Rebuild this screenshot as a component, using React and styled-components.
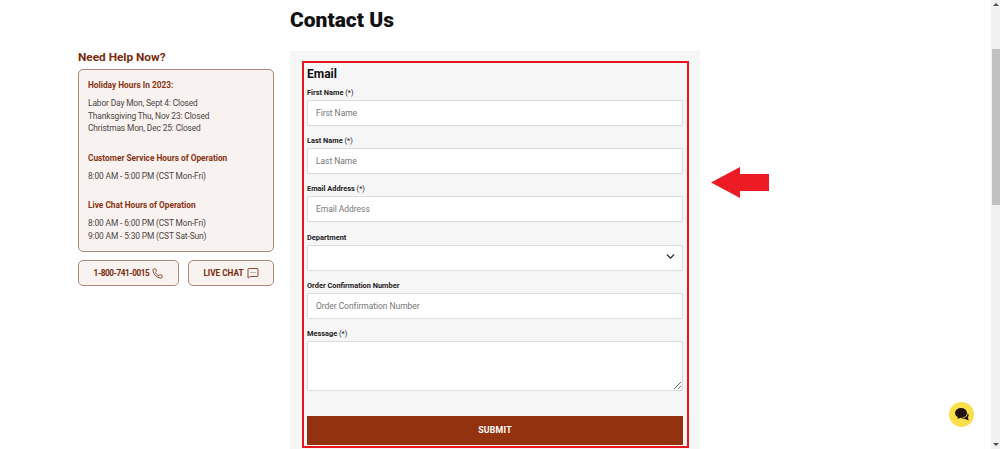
import React from "react";
import styled, { createGlobalStyle } from "styled-components";
import { Phone, MessageSquareMore, ChevronDown } from "lucide-react";

const GlobalStyle = createGlobalStyle`
  html, body {
    margin: 0;
    height: 449px;
    overflow: hidden;
    background: #fff;
    font-family: "Roboto", "Liberation Sans", sans-serif;
  }
  * { box-sizing: border-box; }
`;

const fields = [
  { label: "First Name", required: true, placeholder: "First Name" },
  { label: "Last Name", required: true, placeholder: "Last Name" },
  { label: "Email Address", required: true, placeholder: "Email Address" },
  { label: "Department", select: true },
  { label: "Order Confirmation Number", placeholder: "Order Confirmation Number" },
];

const App = () => {
  return (
    <Page>
      <GlobalStyle />
      <Content>
        <Sidebar>
          <HelpTitle>Need Help Now?</HelpTitle>
          <HoursCard>
            <HoursBlock>
              <HoursTitle>Holiday Hours In 2023:</HoursTitle>
              <HoursLine>Labor Day Mon, Sept 4: Closed</HoursLine>
              <HoursLine>Thanksgiving Thu, Nov 23: Closed</HoursLine>
              <HoursLine>Christmas Mon, Dec 25: Closed</HoursLine>
            </HoursBlock>
            <HoursBlock>
              <HoursTitle>Customer Service Hours of Operation</HoursTitle>
              <HoursLine>8:00 AM - 5:00 PM (CST Mon-Fri)</HoursLine>
            </HoursBlock>
            <HoursBlock>
              <HoursTitle>Live Chat Hours of Operation</HoursTitle>
              <HoursLine>8:00 AM - 6:00 PM (CST Mon-Fri)</HoursLine>
              <HoursLine>9:00 AM - 5:30 PM (CST Sat-Sun)</HoursLine>
            </HoursBlock>
          </HoursCard>
          <ActionRow>
            <ActionButton $width="101px" $spacing="-0.4px">
              1-800-741-0015
              <Phone size={11} strokeWidth={1.7} />
            </ActionButton>
            <ActionButton $width="86px" $spacing="0">
              LIVE CHAT
              <MessageSquareMore size={12} strokeWidth={1.7} />
            </ActionButton>
          </ActionRow>
        </Sidebar>
        <Main>
          <PageTitle>Contact Us</PageTitle>
          <Panel>
            <FormBox>
              <FormTitle>Email</FormTitle>
              {fields.map((f) => (
                <Field key={f.label}>
                  <Label>
                    {f.label}
                    {f.required && <Required> (*)</Required>}
                  </Label>
                  {f.select ? (
                    <SelectWrap>
                      <Select defaultValue="">
                        <option value=""></option>
                      </Select>
                      <SelectIcon size={13} strokeWidth={2.5} />
                    </SelectWrap>
                  ) : (
                    <Input placeholder={f.placeholder} />
                  )}
                </Field>
              ))}
              <Field>
                <Label>
                  Message<Required> (*)</Required>
                </Label>
                <TextArea />
              </Field>
              <Submit type="button">SUBMIT</Submit>
            </FormBox>
          </Panel>
        </Main>
      </Content>
      <Arrow width="58" height="31" viewBox="0 0 58 31">
        <path d="M0 15.5 L29 0 V7 H58 V24 H29 V31 Z" fill="#ed1c24" />
      </Arrow>
      <ChatBubble>
        <svg width="14" height="13" viewBox="0 0 14 13">
          <ellipse cx="6" cy="5" rx="6" ry="5" fill="#1f1410" />
          <path d="M3 8 L2.5 11 L6 9.5 Z" fill="#1f1410" />
          <path d="M12.7 5 C13.8 6 14 8 13 9 L13.6 12.6 L9.5 10.7 C8 10.9 6.5 10.8 5.8 10.4 C9.5 10.6 12.8 8.5 12.7 5 Z" fill="#1f1410" />
        </svg>
      </ChatBubble>
      <Scrollbar>
        <ScrollArrow $dir="up" />
        <ScrollThumb />
        <ScrollArrow $dir="down" />
      </Scrollbar>
    </Page>
  );
};

export default App;

const Page = styled.div`
  position: relative;
  display: flex;
  justify-content: space-between;
  width: 1000px;
  height: 449px;
  overflow: hidden;
`;
const Content = styled.div`
  display: flex;
  gap: 16px;
  padding-left: 78px;
`;
const Sidebar = styled.aside`
  width: 196px;
  padding-top: 50px;
`;
const HelpTitle = styled.h3`
  margin: 0 0 4px;
  height: 15px;
  font-size: 11.8px;
  line-height: 14px;
  font-weight: 700;
  color: #7a2a0e;
`;
const HoursCard = styled.div`
  height: 183px;
  padding: 10px 9px;
  background: #f8f2f0;
  border: 1px solid #ab8a7d;
  border-radius: 5px;
`;
const HoursBlock = styled.div`
  margin-bottom: 18px;
`;
const HoursTitle = styled.div`
  margin-bottom: 6px;
  font-size: 8.3px;
  line-height: 11px;
  font-weight: 700;
  color: #8a3212;
`;
const HoursLine = styled.div`
  font-size: 8.4px;
  line-height: 12.5px;
  letter-spacing: -0.13px;
  color: #4d4644;
`;
const ActionRow = styled.div`
  display: flex;
  justify-content: space-between;
  margin-top: 8px;
`;
const ActionButton = styled.button`
  display: flex;
  align-items: center;
  justify-content: center;
  gap: 3px;
  width: ${(p) => p.$width};
  height: 26px;
  padding: 0;
  font-family: inherit;
  font-size: 8.2px;
  font-weight: 700;
  letter-spacing: ${(p) => p.$spacing};
  color: #7a2a0e;
  background: #f8f2f0;
  border: 1px solid #ab8a7d;
  border-radius: 5px;
`;
const Main = styled.main`
  width: 410px;
`;
const PageTitle = styled.h1`
  margin: 0;
  height: 51px;
  padding-top: 8px;
  font-size: 21px;
  line-height: 25px;
  font-weight: 900;
  color: #111;
`;
const Panel = styled.div`
  height: 398px;
  padding: 10px 11px 0 12px;
  background: #f6f6f6;
`;
const FormBox = styled.form`
  height: 387px;
  padding: 4px 4px 0 3px;
  border: 2px solid #e8141f;
`;
const FormTitle = styled.h2`
  margin: 0 0 5px;
  height: 15px;
  font-size: 12px;
  line-height: 15px;
  font-weight: 700;
  color: #111;
`;
const Field = styled.div`
  margin-bottom: 9.2px;
`;
const Label = styled.label`
  display: block;
  height: 12px;
  margin-bottom: 1px;
  font-size: 7.4px;
  line-height: 12px;
  font-weight: 700;
  color: #222;
`;
const Required = styled.span`
  font-weight: 400;
`;
const Input = styled.input`
  display: block;
  width: 100%;
  height: 26px;
  padding: 0 8px;
  font-family: inherit;
  font-size: 8.5px;
  letter-spacing: -0.05px;
  background: #fff;
  border: 1px solid #dcdcdc;
  border-bottom-width: 1.5px;
  border-radius: 1px;
  outline: none;
  &::placeholder {
    color: #777;
    opacity: 1;
  }
`;
const SelectWrap = styled.div`
  position: relative;
`;
const Select = styled.select`
  display: block;
  width: 100%;
  height: 26px;
  appearance: none;
  background: #fff;
  border: 1px solid #dcdcdc;
  border-bottom-width: 1.5px;
  border-radius: 1px;
`;
const SelectIcon = styled(ChevronDown)`
  position: absolute;
  top: 5px;
  right: 6px;
  color: #222;
`;
const TextArea = styled.textarea`
  display: block;
  width: 100%;
  height: 50px;
  resize: vertical;
  background: #fff;
  border: 1px solid #dcdcdc;
  border-bottom-width: 1.5px;
  border-radius: 1px;
`;
const Submit = styled.button`
  display: block;
  width: 100%;
  height: 29px;
  margin-top: 25px;
  padding: 0;
  font-family: inherit;
  font-size: 8.8px;
  font-weight: 700;
  letter-spacing: 0.2px;
  color: #fff;
  background: #93320f;
  border: none;
`;
const Arrow = styled.svg`
  position: absolute;
  left: 711px;
  top: 167px;
`;
const ChatBubble = styled.div`
  position: absolute;
  left: 949px;
  top: 402px;
  display: flex;
  align-items: center;
  justify-content: center;
  width: 25px;
  height: 25px;
  background: #f9e04b;
  border-radius: 50%;
`;
const Scrollbar = styled.div`
  display: flex;
  flex-direction: column;
  width: 9px;
  height: 449px;
  background: #f1f1f1;
`;
const ScrollArrow = styled.div`
  flex: none;
  height: 9px;
  display: flex;
  align-items: center;
  justify-content: center;
  margin-top: ${(p) => (p.$dir === "down" ? "auto" : "0")};
  &::before {
    content: "";
    border-left: 3px solid transparent;
    border-right: 3px solid transparent;
    ${(p) => (p.$dir === "up" ? "border-bottom: 3px solid #505050;" : "border-top: 3px solid #505050;")}
  }
`;
const ScrollThumb = styled.div`
  height: 156px;
  margin: 40px 0 0 1px;
  background: #c1c1c1;
`;
